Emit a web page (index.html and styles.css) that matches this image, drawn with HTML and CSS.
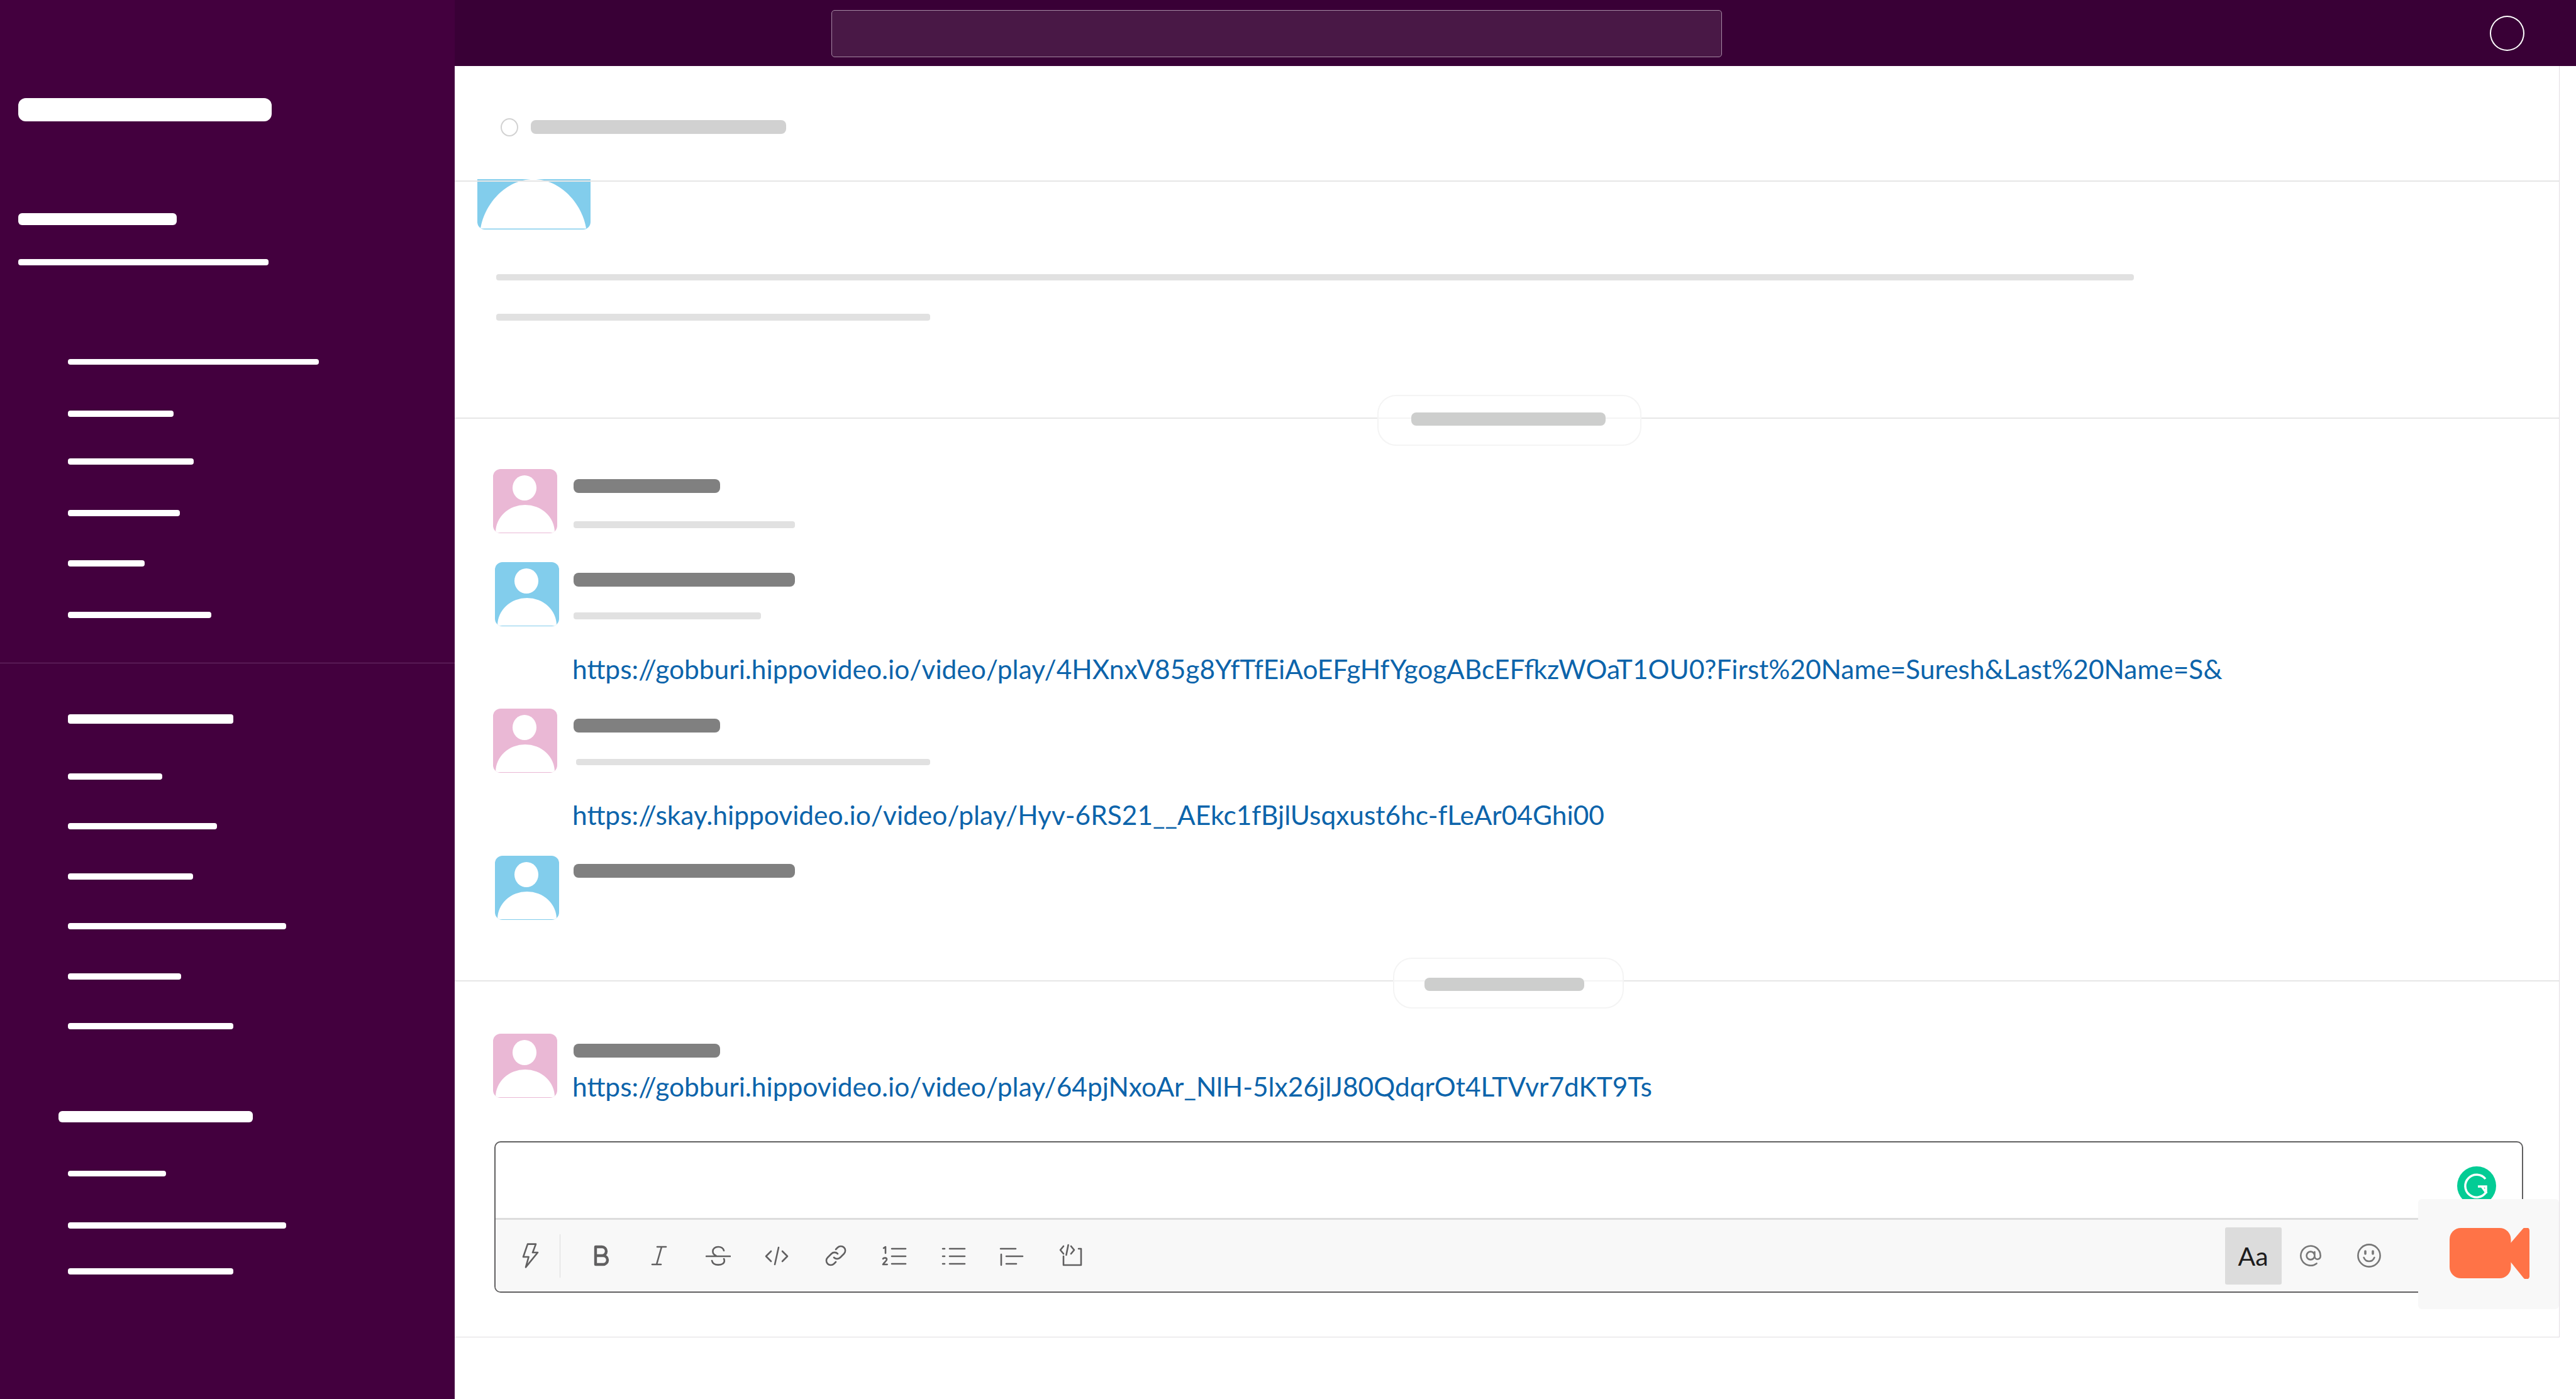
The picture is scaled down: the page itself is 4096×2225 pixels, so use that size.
FILE: index.html
```html
<!DOCTYPE html>
<html lang="en">
<head>
<meta charset="utf-8">
<title>Channel</title>
<link rel="stylesheet" href="styles.css">
</head>
<body>
<div class="app">
  <nav class="sidebar">
    <div class="n n1"></div><div class="n n2"></div><div class="n n3"></div>
    <div class="n n4"></div><div class="n n5"></div><div class="n n6"></div><div class="n n7"></div><div class="n n8"></div><div class="n n9"></div>
    <div class="side-rule"></div>
    <div class="n n10"></div><div class="n n11"></div><div class="n n12"></div><div class="n n13"></div><div class="n n14"></div><div class="n n15"></div><div class="n n16"></div>
    <div class="n n17"></div><div class="n n18"></div><div class="n n19"></div><div class="n n20"></div>
  </nav>
  <div class="main">
    <header class="topbar">
      <div class="search"></div>
      <div class="help"></div>
    </header>
    <section class="pane">
      <div class="pane-head">
        <span class="ring"></span>
        <span class="head-title"></span>
      </div>
      <div class="intro-avatar"><svg viewBox="0 0 168 79"><path d="M0 78.500C6 40 40 0 84 0s78 40 84 78.500z"/></svg></div>
      <div class="line line-a"></div>
      <div class="line line-b"></div>

      <div class="day day-1"><div class="pill pill-1"><span class="pill-bar bar-1"></span></div></div>

      <article class="msg m1">
        <div class="av-col"><div class="avatar pink"></div></div>
        <div class="body"><div class="name short"></div><div class="sub s1"></div></div>
      </article>
      <article class="msg m2">
        <div class="av-col"><div class="avatar blue"></div></div>
        <div class="body"><div class="name long"></div><div class="sub s2"></div></div>
      </article>
      <a class="link l1" href="#">https://gobburi.hippovideo.io/video/play/4HXnxV85g8YfTfEiAoEFgHfYgogABcEFfkzWOaT1OU0?First%20Name=Suresh&amp;Last%20Name=S&amp;</a>
      <article class="msg m3">
        <div class="av-col"><div class="avatar pink"></div></div>
        <div class="body"><div class="name short"></div><div class="sub s3"></div></div>
      </article>
      <a class="link l2" href="#">https://skay.hippovideo.io/video/play/Hyv-6RS21__AEkc1fBjlUsqxust6hc-fLeAr04Ghi00</a>
      <article class="msg m4">
        <div class="av-col"><div class="avatar blue"></div></div>
        <div class="body"><div class="name long"></div></div>
      </article>

      <div class="day day-2"><div class="pill pill-2"><span class="pill-bar bar-2"></span></div></div>

      <article class="msg m5">
        <div class="av-col"><div class="avatar pink"></div></div>
        <div class="body">
          <div class="name short"></div>
          <a class="link l3" href="#">https://gobburi.hippovideo.io/video/play/64pjNxoAr_NlH-5lx26jlJ80QdqrOt4LTVvr7dKT9Ts</a>
        </div>
      </article>

      <div class="composer">
        <div class="editor"></div>
        <div class="toolbar">
          <span class="ico bolt"><svg viewBox="0 0 20 20"><path d="M8 .8h6.500L12 7.500h4L6.500 19.200 8.800 11H4.500z"/></svg></span>
          <span class="tool-sep"></span>
          <span class="tool"><svg class="i-b" viewBox="0 0 20 20"><path d="M6 3h5a3.500 3.500 0 0 1 0 7H6zM6 10h6a3.500 3.500 0 0 1 0 7H6z"/></svg></span>
          <span class="tool"><svg viewBox="0 0 20 20"><path d="M8.500 3h7M4.500 17h7M12 3 8 17"/></svg></span>
          <span class="tool"><svg viewBox="0 0 20 20"><path d="M14.500 6C14 4.200 12.300 3 10 3 7.500 3 5.700 4.500 5.700 6.500c0 1.500.8 2.800 2.500 3.500M14.500 12.500c.3.500.4 1 .4 1.600 0 2-2 3.200-4.900 3.200-2.500 0-4.500-1-5-3.300M.5 10.500h19"/></svg></span>
          <span class="tool"><svg viewBox="0 0 20 20"><path d="M5.500 6.500 1.500 10.500l4 4M14.500 6.500l4 4-4 4M11.500 3.500 8.500 17"/></svg></span>
          <span class="tool"><svg viewBox="0 0 20 20"><path d="M8.500 11.500a3.500 3.500 0 0 0 5 0l3-3a3.500 3.500 0 0 0-5-5l-1.500 1.500M11.500 8.500a3.500 3.500 0 0 0-5 0l-3 3a3.500 3.500 0 0 0 5 5l1.500-1.500"/></svg></span>
          <span class="tool"><svg viewBox="0 0 20 20"><path d="M1.500 4 3 3v5M1 12.500c.6-1 3-1 3 .5 0 1.200-2 2.200-3 4h3.300M8 4.500h11M8 10.500h11M8 16.500h11"/></svg></span>
          <span class="tool"><svg viewBox="0 0 20 20"><path d="M1.500 4.500h1.500M1.500 10.500h1.500M1.500 16.500h1.500M7 4.500h12M7 10.500h12M7 16.500h12"/></svg></span>
          <span class="tool"><svg viewBox="0 0 20 20"><path d="M1 4.500h12M1.500 9v8.500M5.500 10.500h13M5.500 16.500h8"/></svg></span>
          <span class="tool"><svg viewBox="0 0 20 20"><path d="M4 10.500v7h14V4.500h-2M4 2.500 1.500 5.500 4 8.500M10 2.500l2.500 3-2.500 3M7.800 1.500 6.200 9.500"/></svg></span>
          <span class="aa">Aa</span>
          <span class="ico at"><svg viewBox="0 0 20 20"><path d="M13.200 10a3.200 3.200 0 1 1-6.400 0 3.200 3.200 0 0 1 6.400 0zm0-3v4a2.300 2.300 0 0 0 4.600-1 7.800 7.800 0 1 0-3 6.200"/></svg></span>
          <span class="ico smile"><svg viewBox="0 0 20 20"><circle cx="10" cy="10" r="8.800"/><path d="M5.800 11.500c.8 2 2.300 3 4.200 3s3.400-1 4.200-3"/><path class="eye" d="M7 6.500v2M13 6.500v2"/></svg></span>
        </div>
        <svg class="grammarly" viewBox="0 0 62 62"><circle class="g-disc" cx="31" cy="31" r="31"/><path class="g-mark" d="M45 20a18 18 0 1 0 1 21V32H33M39 32l8 11"/></svg>
      </div>

      <div class="video-box">
        <svg viewBox="0 0 127 81"><rect class="cam" x="0" y="0" width="97.500" height="80" rx="18"/><path class="cam" d="M97 24 117 .8c3-2.800 10-2.800 10 3.500v72.500c0 5-6 6.400-9.200 3L97 54z"/></svg>
      </div>
    </section>
  </div>
</div>
</body>
</html>
```
FILE: styles.css
```css
* { box-sizing: border-box; }
html, body { margin: 0; height: 100%; background: #fff; overflow: hidden; }
body { font-family: Lato, "Noto Sans", sans-serif; }

.app { display: flex; width: 4096px; height: 2225px; }

/* sidebar */
.sidebar { flex: none; width: 723px; height: 100%; background: #43003e; display: flow-root; }
.n { background: #fff; height: 10px; width: 200px; margin-left: 108px; border-radius: 4px; }
.n1 { margin: 156px 0 0 29px; width: 403px; height: 37px; border-radius: 12px; }
.n2 { margin: 146px 0 0 29px; width: 252px; height: 19px; border-radius: 6px; }
.n3 { margin: 54px 0 0 29px; width: 398px; height: 9.500px; }
.n4 { margin-top: 149.500px; width: 399px; height: 9px; }
.n5 { margin-top: 73px; width: 168px; }
.n6 { margin-top: 66px; width: 200px; }
.n7 { margin-top: 72px; width: 178px; }
.n8 { margin-top: 70px; width: 121.500px; height: 9.600px; }
.n9 { margin-top: 72.400px; width: 228px; }
.side-rule { height: 1px; margin-top: 70.600px; background: #6a3268; }
.n10 { margin-top: 81.400px; width: 263px; height: 15px; }
.n11 { margin-top: 79px; width: 150px; }
.n12 { margin-top: 69.500px; width: 237px; }
.n13 { margin-top: 69.500px; width: 199px; }
.n14 { margin-top: 69px; width: 347px; }
.n15 { margin-top: 70px; width: 180px; }
.n16 { margin-top: 69px; width: 263px; }
.n17 { margin: 130px 0 0 92.600px; width: 309px; height: 18px; border-radius: 6px; }
.n18 { margin-top: 77px; width: 156px; height: 9.500px; }
.n19 { margin-top: 72.500px; width: 347px; }
.n20 { margin-top: 63px; width: 263px; }

/* top bar */
.main { flex: 1; min-width: 0; display: flex; flex-direction: column; }
.topbar { flex: none; height: 104.600px; background: #390036; display: flex; align-items: center; padding: 2px 82px 0 598.600px; }
.search { width: 1416.600px; height: 75.400px; background: #491846; border: 1.500px solid #a58aa3; border-radius: 5px; }
.help { margin-left: auto; width: 55px; height: 56px; border: 2px solid #fff; border-radius: 50%; }

/* message pane */
.pane { position: relative; width: 3346.500px; height: 2022px; border-right: 1px solid #e2dde2; border-bottom: 1px solid #e0dde0; }
.pane-head { position: relative; z-index: 1; height: 184.400px; border-bottom: 2.500px solid #e6e6e6; padding: 83.400px 0 0 73px; display: flex; align-items: flex-start; gap: 20px; }
.ring { width: 28px; height: 29px; border: 2.500px solid #d2d2d2; border-radius: 50%; }
.head-title { width: 406px; height: 22px; margin-top: 3.500px; background: #d1d1d1; border-radius: 8px; }

.intro-avatar { overflow: hidden; margin: -4.400px 0 0 36px; padding-left: 5px; width: 180px; height: 80.400px; background: #82cdec; border-radius: 0 0 12px 12px; }
.intro-avatar svg { display: block; width: 168px; height: 79px; fill: #fff; }

.line { height: 10.500px; margin-left: 65.500px; background: #e1e1e1; border-radius: 4px; }
.line-a { margin-top: 71px; width: 2604.500px; }
.line-b { margin-top: 53px; width: 690px; }

.day { position: relative; height: 2.500px; background: #e6e6e6; }
.day-1 { margin-top: 154px; }
.day-2 { margin-top: 96px; }
.pill { position: absolute; display: flex; align-items: center; justify-content: center; background: rgba(255, 255, 255, .55); border: 2.500px solid #f4f4f4; border-radius: 30px; }
.pill-1 { left: 1467px; top: -35.500px; width: 420px; height: 80.500px; padding: 0 4px 4px 0; }
.pill-2 { left: 1492px; top: -36px; width: 367px; height: 81.500px; padding: 4px 13px 0 0; }
.pill-bar { height: 21.500px; background: #cdcecd; border-radius: 8px; }
.bar-1 { width: 309px; }
.bar-2 { width: 254px; }

/* messages */
.msg { display: flex; }
.m1 { margin-top: 79.500px; }
.m2 { margin-top: 46px; }
.m3 { margin-top: 36px; }
.m4 { margin-top: 37.600px; }
.m5 { margin-top: 83px; }
.av-col { flex: none; width: 188.600px; }
.avatar { position: relative; overflow: hidden; width: 101.500px; height: 102px; border-radius: 12px; }
.avatar::before { content: ""; position: absolute; left: 30.700px; top: 10px; width: 38.300px; height: 40px; background: #fff; border-radius: 50%; }
.avatar::after { content: ""; position: absolute; left: 3.500px; top: 57.300px; width: 94.500px; height: 44px; background: #fff; border-radius: 50% 50% 0 0 / 100% 100% 0 0; }
.pink { background: #eab8d5; margin-left: 61px; }
.blue { background: #82cdec; margin-left: 64px; }

.name { height: 22px; background: #808080; border-radius: 8px; }
.short { width: 233px; }
.long { width: 352.500px; }
.m1 .name, .m5 .name { margin-top: 16px; }
.m2 .name { margin-top: 17px; }
.m3 .name { margin-top: 15.600px; }
.m4 .name { margin-top: 13.400px; }
.sub { height: 10.500px; background: #e1e1e1; border-radius: 4px; }
.s1 { margin-top: 45.500px; width: 352.500px; }
.s2 { margin-top: 41.500px; width: 298.500px; }
.s3 { margin: 42px 0 0 4px; width: 563px; }

.link { display: block; font-size: 42.450px; line-height: 56px; color: #0c64ab; text-decoration: none; white-space: nowrap; }
.l1 { margin: 39.600px 0 -0.600px 187px; }
.l2 { margin: 38.600px 0 -0.600px 187px; }
.l3 { margin: 18px 0 -0.600px -1.600px; }

/* composer */
.composer { position: relative; margin: 60px 0 0 62.500px; width: 3226.500px; height: 241px; display: flex; flex-direction: column; border: 2.500px solid #616061; border-radius: 10px; }
.editor { flex: none; height: 119.500px; }
.toolbar { flex: 1; display: flex; align-items: center; padding-left: 35.800px; background: #f8f8f8; border-top: 3px solid #ddd; border-radius: 0 0 8px 8px; }
.toolbar svg { display: block; width: 40px; height: 40px; fill: none; stroke: #616061; stroke-width: 1.300; stroke-linecap: round; stroke-linejoin: round; }
.ico { flex: none; }
.tool-sep { flex: none; width: 1.500px; height: 68.600px; margin: 0 16.500px 0 26.500px; background: #ddd; }
.tool { flex: none; width: 93.500px; display: flex; justify-content: center; }
.toolbar .i-b { stroke-width: 2.200; }
.toolbar .at svg, .toolbar .smile svg { stroke: #777; }
.toolbar .eye { stroke-width: 1.800; }
.aa { flex: none; margin-left: auto; width: 90px; height: 91px; display: flex; align-items: center; justify-content: center; background: #dcdcdc; border-radius: 3px; font-size: 41px; color: #1d1c1d; }
.at { margin-left: 26px; }
.smile { margin: 0 223px 0 53.500px; }

.grammarly { position: absolute; left: 3119px; top: 37.500px; width: 62px; height: 62px; }
.g-disc { fill: #03cc95; }
.g-mark { fill: none; stroke: #fff; stroke-width: 3.500; }

.video-box { position: absolute; left: 3121.700px; top: 1802.400px; width: 224.800px; height: 175.400px; display: flex; align-items: flex-start; background: #f8f8f8; border-radius: 6px; padding: 46.500px 0 0 50px; }
.video-box svg { width: 127px; height: 81px; }
.cam { fill: #ff7347; }
```
